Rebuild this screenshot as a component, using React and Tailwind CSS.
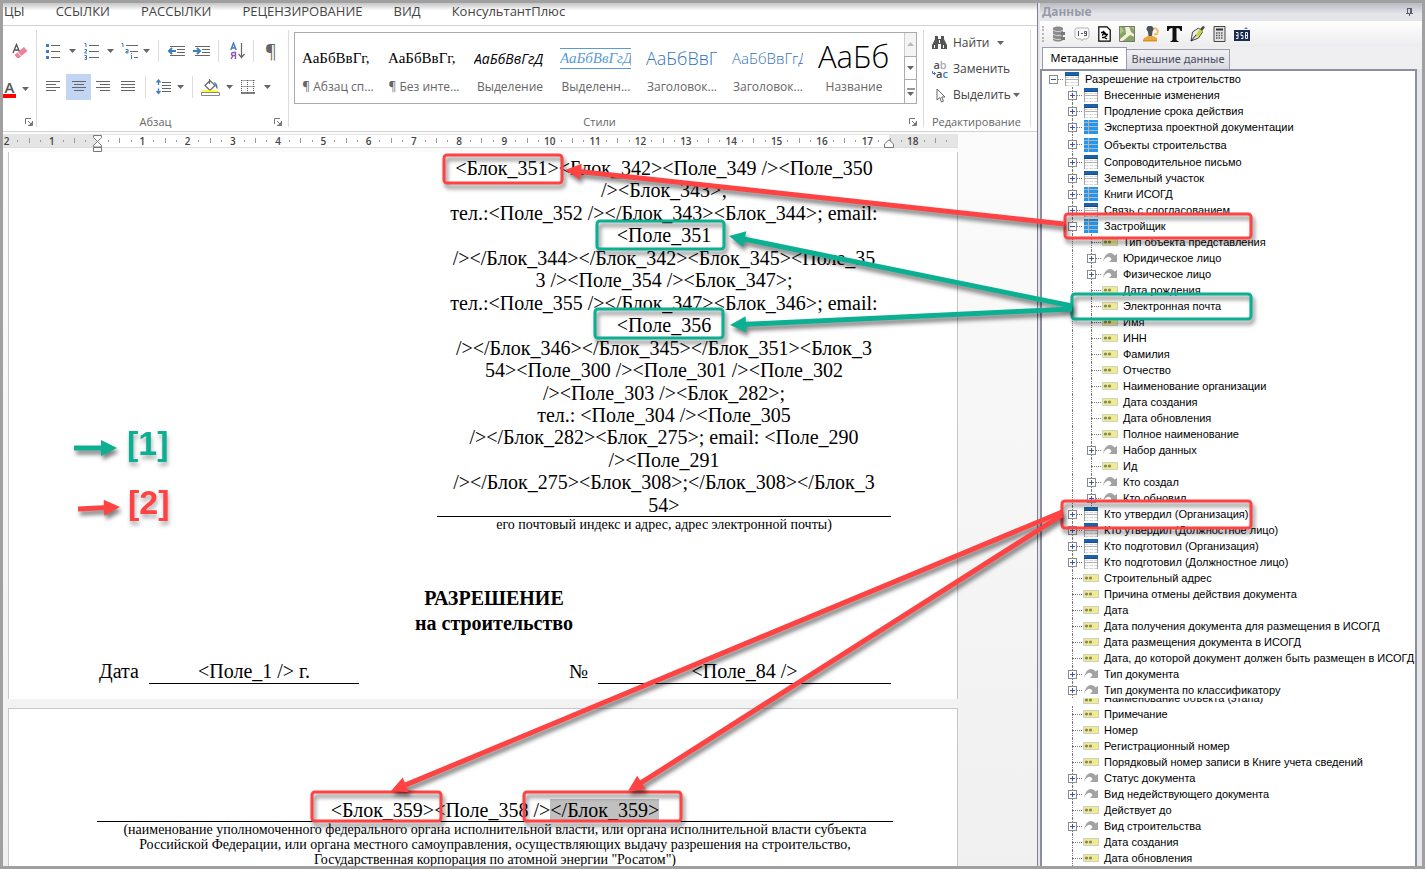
import React from "react";
import clsx from "clsx";

const RIBBON_TABS = ["ЦЫ", "ССЫЛКИ", "РАССЫЛКИ", "РЕЦЕНЗИРОВАНИЕ", "ВИД", "КонсультантПлюс"];

const STYLES = [
  { sample: "АаБбВвГг,", name: "¶ Абзац сп...", className: "font-['Liberation_Serif',serif] text-[15px] text-black" },
  { sample: "АаБбВвГг,", name: "¶ Без инте...", className: "font-['Liberation_Serif',serif] text-[15px] text-black" },
  { sample: "АаБбВвГгД", name: "Выделение", className: "text-[14px] italic text-black" },
  {
    sample: "АаБбВвГгД",
    name: "Выделенн...",
    className: "border-y border-[#5b9bd5] font-['Liberation_Serif',serif] text-[15px] italic text-[#5b9bd5]",
  },
  { sample: "АаБбВвГ", name: "Заголовок...", className: "text-[18px] font-light text-[#2e74b5]" },
  { sample: "АаБбВвГгД", name: "Заголовок...", className: "text-[15px] font-light text-[#2e74b5]" },
  { sample: "АаБб", name: "Название", className: "text-[31px] font-light text-black" },
];

const ADDRESS_LINES = [
  "<Блок_351><Блок_342><Поле_349 /><Поле_350",
  "/><Блок_343>;",
  "тел.:<Поле_352 /></Блок_343><Блок_344>; email:",
  "<Поле_351",
  "/></Блок_344></Блок_342><Блок_345><Поле_35",
  "3 /><Поле_354 /><Блок_347>;",
  "тел.:<Поле_355 /></Блок_347><Блок_346>; email:",
  "<Поле_356",
  "/></Блок_346></Блок_345></Блок_351><Блок_3",
  "54><Поле_300 /><Поле_301 /><Поле_302",
  "/><Поле_303 /><Блок_282>;",
  "тел.: <Поле_304 /><Поле_305",
  "/></Блок_282><Блок_275>; email: <Поле_290",
  "/><Поле_291",
  "/></Блок_275><Блок_308>;</Блок_308></Блок_3",
  "54>",
];

// icon: table | grid | ref | field
const TREE = [
  { level: 0, icon: "table", label: "Разрешение на строительство", open: true },
  { level: 1, icon: "table", label: "Внесенные изменения", open: false },
  { level: 1, icon: "table", label: "Продление срока действия", open: false },
  { level: 1, icon: "grid", label: "Экспертиза проектной документации", open: false },
  { level: 1, icon: "grid", label: "Объекты строительства", open: false, tall: true },
  { level: 1, icon: "table", label: "Сопроводительное письмо", open: false },
  { level: 1, icon: "table", label: "Земельный участок", open: false },
  { level: 1, icon: "grid", label: "Книги ИСОГД", open: false },
  { level: 1, icon: "table", label: "Связь с слогласованием", open: false },
  { level: 1, icon: "grid", label: "Застройщик", open: true },
  { level: 2, icon: "field", label: "Тип объекта представления" },
  { level: 2, icon: "ref", label: "Юридическое лицо", open: false },
  { level: 2, icon: "ref", label: "Физическое лицо", open: false },
  { level: 2, icon: "field", label: "Дата рождения" },
  { level: 2, icon: "field", label: "Электронная почта" },
  { level: 2, icon: "field", label: "Имя" },
  { level: 2, icon: "field", label: "ИНН" },
  { level: 2, icon: "field", label: "Фамилия" },
  { level: 2, icon: "field", label: "Отчество" },
  { level: 2, icon: "field", label: "Наименование организации" },
  { level: 2, icon: "field", label: "Дата создания" },
  { level: 2, icon: "field", label: "Дата обновления" },
  { level: 2, icon: "field", label: "Полное наименование" },
  { level: 2, icon: "ref", label: "Набор данных", open: false },
  { level: 2, icon: "field", label: "Ид" },
  { level: 2, icon: "ref", label: "Кто создал", open: false },
  { level: 2, icon: "ref", label: "Кто обновил", open: false },
  { level: 1, icon: "table", label: "Кто утвердил (Организация)", open: false },
  { level: 1, icon: "table", label: "Кто утвердил (Должностное лицо)", open: false },
  { level: 1, icon: "table", label: "Кто подготовил (Организация)", open: false },
  { level: 1, icon: "table", label: "Кто подготовил (Должностное лицо)", open: false },
  { level: 1, icon: "field", label: "Строительный адрес" },
  { level: 1, icon: "field", label: "Причина отмены действия документа" },
  { level: 1, icon: "field", label: "Дата" },
  { level: 1, icon: "field", label: "Дата получения документа для размещения в ИСОГД" },
  { level: 1, icon: "field", label: "Дата размещения документа в ИСОГД" },
  { level: 1, icon: "field", label: "Дата, до которой документ должен быть размещен в ИСОГД" },
  { level: 1, icon: "ref", label: "Тип документа", open: false },
  { level: 1, icon: "ref", label: "Тип документа по классификатору", open: false },
  { level: 1, icon: "field", label: "Наименование объекта (этапа)", cut: true },
  { level: 1, icon: "field", label: "Примечание" },
  { level: 1, icon: "field", label: "Номер" },
  { level: 1, icon: "field", label: "Регистрационный номер" },
  { level: 1, icon: "field", label: "Порядковый номер записи в Книге учета сведений" },
  { level: 1, icon: "ref", label: "Статус документа", open: false },
  { level: 1, icon: "ref", label: "Вид недействующего документа", open: false },
  { level: 1, icon: "field", label: "Действует до" },
  { level: 1, icon: "ref", label: "Вид строительства", open: false },
  { level: 1, icon: "field", label: "Дата создания" },
  { level: 1, icon: "field", label: "Дата обновления" },
];

/* ---------- ribbon icons ---------- */

const Caret = ({ className }) => (
  <svg width="7" height="4" viewBox="0 0 7 4" className={clsx("shrink-0", className)} fill="#666">
    <path d="M0 0h7L3.5 4z" />
  </svg>
);

const Launcher = () => (
  <svg width="8" height="8" viewBox="0 0 8 8" fill="none" stroke="#777">
    <path d="M.5 6V.5H6M3 3l3 3M7.5 3v4.5H3" />
    <path d="M7 4v3H4z" fill="#777" stroke="none" />
  </svg>
);

const Lines = ({ rows, width = 14 }) => (
  <svg width={width} height="12" viewBox={`0 0 ${width} 12`} stroke="#666">
    {rows.map(([from, to], i) => (
      <path key={i} d={`M${from} ${i * 3 + 0.5}H${to}`} />
    ))}
  </svg>
);

const EraserIcon = () => (
  <svg width="16" height="18" viewBox="0 0 16 18">
    <path d="M1 11L4.500 2.500L8 11M2.300 8H6.800" fill="none" stroke="#555" strokeWidth="1.4" />
    <path d="M6 10l6-5 3.500 4-6 5z" fill="#e8849a" />
    <path d="M2.500 13l3-2.500 3.500 4-2 1.500H5z" fill="#e8849a" />
  </svg>
);

const BulletsIcon = () => (
  <svg width="14" height="17" viewBox="0 0 14 17">
    <path d="M5 2.500h9M5 8.500h9M5 14.500h9" stroke="#666" />
    <path d="M0 1h3v3H0zM0 7h3v3H0zM0 13h3v3H0z" fill="#3f7dbd" />
  </svg>
);

const NumbersIcon = () => (
  <svg width="15" height="17" viewBox="0 0 15 17" fill="none">
    <path d="M5 2.500h10M5 8.500h10M5 14.500h10" stroke="#666" />
    <path d="M.5 .5H2V4M.5 6.500h2v1.500L.5 10h2.500M.5 12.500h2v4h-2M1 14.500h1.500" stroke="#3f7dbd" />
  </svg>
);

const MultilevelIcon = () => (
  <svg width="17" height="17" viewBox="0 0 17 17" fill="none">
    <path d="M5 2.500h12M9 8.500h8M13 14.500h4" stroke="#666" />
    <path d="M.5 .5H2V4M4.500 6.500H7V10H5V8.500h2M10.500 10v1M10.500 12v4" stroke="#3f7dbd" />
  </svg>
);

const IndentIcon = ({ out }) => (
  <svg width="17" height="13" viewBox="0 0 17 13" fill="none">
    <path d="M2 1.500h15M9 4.500h8M9 7.500h8M2 10.500h15" stroke="#666" />
    <path d="M0 3h8v6H0z" fill="#fff" />
    <path d={out ? "M8 6H1.500M4 3L1 6l3 3" : "M0 6h6.500M4 3l3 3-3 3"} stroke="#3f7dbd" strokeWidth="2" />
  </svg>
);

const SortIcon = () => (
  <svg width="15" height="18" viewBox="0 0 15 18" fill="none">
    <path d="M.8 8L3.500 1L6.200 8M1.800 6h3.500" stroke="#3f7dbd" strokeWidth="1.400" />
    <path d="M5.500 17v-6.500H3a1.500 1.500 0 0 0 0 3h2.500M3 13.500L1 17" stroke="#8b55b5" strokeWidth="1.400" />
    <path d="M11.500 1v14M8.500 12l3 3.500 3-3.500" stroke="#666" strokeWidth="1.200" />
  </svg>
);

const SpacingIcon = () => (
  <svg width="15" height="16" viewBox="0 0 15 16" fill="none">
    <path d="M6 3.500h9M6 6.500h9M6 9.500h9M6 12.500h9" stroke="#666" />
    <path d="M2.500 1v5M.5 3.500L2.500 1l2 2.500M2.500 9.500v5M.5 12l2 2.500 2-2.500" stroke="#3f7dbd" strokeWidth="1.300" />
  </svg>
);

const BucketIcon = () => (
  <svg width="19" height="19" viewBox="0 0 19 19" fill="none">
    <path d="M4 7.500L9 2.500l5 5-5 5zM8.500 6V1" stroke="#666" strokeWidth="1.200" />
    <path d="M12.500 4c3 .5 4.500 3 4 7-1.200-.5-2-2-2-4z" fill="#3f7dbd" />
    <path d="M1 12.500h16v2H1z" fill="#ff0" />
    <path d="M.5 14.500h18v3H.5z" fill="#fff" stroke="#888" />
  </svg>
);

const BordersIcon = () => (
  <svg width="14" height="14" viewBox="0 0 14 14" fill="none" stroke="#555">
    <path d="M.5 .5h13M.5 6.500h13M.5 0v13M6.500 0v13M12.500 0v13" strokeDasharray="1 1" />
    <path d="M0 13h14" strokeWidth="1.500" />
  </svg>
);

const BinocularsIcon = () => (
  <svg width="15" height="14" viewBox="0 0 15 14" fill="#555">
    <path d="M3 0h3v3h3V0h3v3l3 6v4H9V8H6v5H0V9l3-6z" />
    <path d="M2 9h1v3H2zM11 9h1v3h-1zM7 4h1v3H7z" fill="#fff" />
  </svg>
);

const ReplaceIcon = () => (
  <span className="flex w-4 flex-col text-[11px] leading-[7px] font-semibold">
    <span className="text-[#555]">
      a<span className="text-[#aaa]">b</span>
    </span>
    <span className="flex items-center pt-0.5 text-[#444]">
      <svg width="4" height="5" viewBox="0 0 4 5" fill="none" stroke="#3f7dbd">
        <path d="M.5 0v2.500h3M2 1l1.500 1.500L2 4" />
      </svg>
      a<span className="text-[#3f7dbd]">c</span>
    </span>
  </span>
);

const CursorIcon = () => (
  <svg width="10" height="15" viewBox="0 0 10 15" fill="#fff" stroke="#666">
    <path d="M1 1v11l2.800-2.500L5.500 14l2-.8-1.800-4.200H9z" />
  </svg>
);

const Divider = ({ className }) => <span className={clsx("w-px self-stretch bg-[#dcdcdc]", className)} />;

const ToolButton = ({ label, className, children }) => (
  <button type="button" aria-label={label} className={clsx("flex items-center", className)}>
    {children}
  </button>
);

/* ---------- tree icons ---------- */

const TableIcon = () => (
  <svg width="14" height="14" viewBox="0 0 14 14">
    <path d="M0 4h14v10H0z" fill="#fff" />
    <path d="M1 5.500h12M1 10.500h12M1 13.500h12" stroke="#d6d6d6" strokeDasharray="3.500 1" />
    <path d="M0 7.500h14" stroke="#b0b0b0" />
    <path d="M.5 3v11M13.500 3v11" stroke="#a5a5a5" />
    <path d="M0 0h14v3H0z" fill="#1c62a8" />
    <path d="M0 3h14v1H0z" fill="#154c85" />
  </svg>
);

const GridIcon = () => (
  <svg width="14" height="14" viewBox="0 0 14 14">
    <path d="M0 0h14v14H0z" fill="#b9b4ae" />
    <path d="M0 0h4v2H0zM5 0h9v2H5zM0 3h4v3H0zM5 3h9v3H5zM0 7h4v3H0zM5 7h9v3H5zM0 11h4v3H0zM5 11h9v3H5z" fill="#2196f3" />
  </svg>
);

const RefIcon = () => (
  <svg width="15" height="11" viewBox="0 0 15 11" fill="#a3a3a3">
    <path d="M0 9C1 3 4 0 7 0c2 0 3.500 1 4.500 2.500L14 1v8H6l2.500-2.500C7.500 4 6 3.500 4.500 4 2.500 4.700 1 6.500 0 9z" />
  </svg>
);

const FieldIcon = () => (
  <svg width="16" height="8" viewBox="0 0 16 8">
    <path d="M0 0h16v8H0z" fill="#cfcfc6" />
    <path d="M1 1h14v6H1z" fill="#eeec8e" />
    <circle cx="3.500" cy="4" r="1.600" fill="#85855f" />
    <circle cx="7.500" cy="4" r="1.600" fill="#85855f" />
  </svg>
);

const TREE_ICONS = { table: TableIcon, grid: GridIcon, ref: RefIcon, field: FieldIcon };

const TreeRow = ({ node }) => {
  const Icon = TREE_ICONS[node.icon];
  const expandable = node.open !== undefined;
  return (
    <li
      className={clsx(
        "flex shrink-0 overflow-hidden whitespace-nowrap",
        node.cut ? "h-2 items-end pb-0.5" : "items-center",
        node.tall && "h-[19px]",
        !node.cut && !node.tall && "h-4"
      )}
    >
      {node.level > 0 && <span className="w-[19px]" />}
      {node.level > 1 && (
        <span className="flex w-[19px] self-stretch pl-[9px]">
          <span className="border-l border-dotted border-[#777]" />
        </span>
      )}
      <span className="relative flex w-[19px] shrink-0 items-center self-stretch">
        {node.level > 0 && !node.cut && (
          <span className="absolute inset-y-0 left-[9px] border-l border-dotted border-[#777]" />
        )}
        {!node.cut && <span className="ml-[9px] w-[11px] border-t border-dotted border-[#777]" />}
        {expandable && (
          <button
            type="button"
            aria-label={node.label}
            aria-expanded={node.open}
            className="absolute left-[5px] flex size-[9px] items-center justify-center border border-[#8c8c8c] bg-white"
          >
            <svg width="5" height="5" viewBox="0 0 5 5" stroke="#3a55a4">
              <path d={node.open ? "M0 2.500h5" : "M0 2.500h5M2.500 0v5"} />
            </svg>
          </button>
        )}
      </span>
      <span className={clsx("flex w-[22px] shrink-0", node.icon === "field" ? "pl-px" : "pl-0.5")}>
        <Icon />
      </span>
      <span className={clsx(node.cut ? "leading-3" : "leading-4")}>{node.label}</span>
    </li>
  );
};

/* ---------- data panel ---------- */

const PanelToolbar = () => (
  <div className="flex h-[26px] shrink-0 items-center gap-2 bg-gradient-to-b from-white to-[#ececee] pl-0.5">
    <span className="h-4 border-l-2 border-dotted border-[#b5b5b5]" />
    <ToolButton label="База данных">
      <svg width="14" height="16" viewBox="0 0 14 16">
        <path d="M1 2c2-2 8-2 10 0v12c-2 2-8 2-10 0z" fill="#8b8b8b" />
        <path d="M1 4c2 2 8 2 10 0M1 8c2 2 8 2 10 0M1 12c2 2 8 2 10 0" stroke="#d8d8d8" fill="none" />
        <path d="M9 6h4v3H9zM9 11h4v3H9z" fill="#777" />
      </svg>
    </ToolButton>
    <ToolButton label="Диапазон">
      <svg width="16" height="15" viewBox="0 0 16 15">
        <path d="M2 1h12l1 2v7l-2 2h-4l-1 2-1-2H3l-2-2V3z" fill="#fafafa" stroke="#b5b5b5" />
        <path d="M4.500 4v5M7 6.500h2M10 8.500h2.500V4.500H10.500v2h2" stroke="#555" fill="none" />
      </svg>
    </ToolButton>
    <ToolButton label="Документ">
      <svg width="13" height="16" viewBox="0 0 13 16" fill="none" stroke="#000">
        <path d="M.8 .8H9l3.200 3.200v11.200H.8z" fill="#fff" strokeWidth="1.200" />
        <path d="M3 6.500h3l1 2h3M4 9.500l2-2M5 5l3 3M4 11.500h2l3-2M7 12l2 1" strokeWidth="1.300" />
      </svg>
    </ToolButton>
    <ToolButton label="Карта">
      <svg width="16" height="16" viewBox="0 0 16 16">
        <path d="M0 0h16v16H0z" fill="#84a565" />
        <path d="M6 0h4l2 6 4 3v2l-5-2-6 5-3 2H0v-2l7-6z" fill="#f4f0d8" />
        <path d="M11 0l5 5V0zM0 9l5-4-3-5H0z" fill="#a9c97f" />
        <path d="M.5 .5h15v15H.5z" fill="none" stroke="#777" />
      </svg>
    </ToolButton>
    <ToolButton label="Пользователь">
      <svg width="16" height="16" viewBox="0 0 16 16">
        <path d="M10 2.500h3l2 2.500-1 3-3 .5" fill="none" stroke="#f0b95c" strokeWidth="1.800" />
        <path d="M3.500 3.500a3.500 3.500 0 1 1 6 2L9 10H5.500L5 6z" fill="#4c5359" />
        <path d="M1 12l4-2h5l4 2v2H0z" fill="#e9a63c" />
        <path d="M0 14h14v1.500H0z" fill="#d8902a" />
      </svg>
    </ToolButton>
    <ToolButton label="Текст">
      <svg width="15" height="16" viewBox="0 0 15 16">
        <path d="M0 0h15v5h-1.500c-.5-2-1.500-3-4-3v11c0 1.500.5 2 2 2v1H3.500v-1c1.500 0 2-.5 2-2V2c-2.500 0-3.500 1-4 3H0z" fill="#111" />
      </svg>
    </ToolButton>
    <ToolButton label="Подпись">
      <svg width="15" height="16" viewBox="0 0 15 16">
        <path d="M1 15L2.500 6l6-4 4 4-4 6z" fill="#e9e9e9" stroke="#444" />
        <path d="M5 10l5-7 3-1-1 4-4 5z" fill="#c9d42a" />
        <path d="M10 3l3-3 2 1-3 4z" fill="#444" />
        <path d="M1 15l5-6" stroke="#222" />
      </svg>
    </ToolButton>
    <ToolButton label="Калькулятор">
      <svg width="13" height="16" viewBox="0 0 13 16">
        <path d="M1 .5h11v15H1z" fill="#e4e4e4" stroke="#444" />
        <path d="M3 2.500h7v2H3z" fill="#333" />
        <path d="M3 7h7M3 9.500h7M3 12h7" stroke="#555" strokeWidth="1.500" strokeDasharray="1.500 1" />
      </svg>
    </ToolButton>
    <ToolButton label="Счетчик">
      <svg width="16" height="16" viewBox="0 0 16 16">
        <path d="M0 4h16v11H0z" fill="#1b2c4f" />
        <path d="M2 6.500h2v6H2M2 9.500h2M9 6.500H7v3h2v3H7M11.500 6.500h2v6h-2zM11.500 9.500h2" stroke="#e8eef8" fill="none" />
        <path d="M10 3l2-2 2 2z" fill="#5d7cc0" />
      </svg>
    </ToolButton>
  </div>
);

const DataPanel = () => (
  <aside className="flex w-[385px] shrink-0 flex-col border-l border-[#7d7f92] bg-[#e6e6ea] pl-0.5 font-['Liberation_Sans',Arial,sans-serif] text-[11px] text-black">
    <header className="flex h-[18px] shrink-0 items-center justify-between bg-gradient-to-b from-[#b9bac0] to-[#e4e5ea] to-60% pl-0.5 pr-[9px]">
      <h2 className="font-['Noto_Sans',sans-serif] text-[12px] leading-4 font-bold text-[#9699a8]">Данные</h2>
      <button type="button" aria-label="Закрепить">
        <svg width="7" height="8" viewBox="0 0 7 8" fill="none" stroke="#5a5c70">
          <path d="M1.500 0v5M2 .5h3M4.500 0v5M5.500 0v5M0 5.500h7M3.500 5v3" />
        </svg>
      </button>
    </header>
    <PanelToolbar />
    <div role="tablist" className="flex h-[22px] shrink-0 items-end bg-[#efeff1] pl-0.5 font-['Noto_Sans',sans-serif]">
      <button
        type="button"
        role="tab"
        aria-selected="true"
        className="h-[22px] w-[85px] border border-b-0 border-[#9a9cac] bg-white text-center"
      >
        Метаданные
      </button>
      <button
        type="button"
        role="tab"
        aria-selected="false"
        className="h-[20px] w-[103px] border border-b-0 border-l-0 border-[#9a9cac] bg-gradient-to-b from-[#f1f1f4] to-[#d9dae0] text-center text-[#4a4c60]"
      >
        Внешние данные
      </button>
    </div>
    <div className="mr-[5px] flex min-h-0 flex-1 flex-col overflow-hidden border-x-2 border-t-2 border-[#8b8da0] bg-white pl-0.5">
      <ul className="flex flex-col">
        {TREE.map((node, i) => (
          <TreeRow key={i} node={node} />
        ))}
      </ul>
    </div>
  </aside>
);

/* ---------- ribbon ---------- */

const FontGroup = () => (
  <div className="flex w-8 flex-col pb-px">
    <div className="flex h-[38px] items-center pl-[9px] pt-1">
      <ToolButton label="Очистить формат">
        <EraserIcon />
      </ToolButton>
    </div>
    <div className="mt-3 flex items-center gap-1.5">
      <button type="button" className="w-[13px] border-b-4 border-[#f00] text-[15px] leading-[14px] font-semibold text-[#555]">
        А
      </button>
      <Caret />
    </div>
    <div className="mt-auto flex h-4 items-center justify-end pr-0.5">
      <button type="button" aria-label="Шрифт">
        <Launcher />
      </button>
    </div>
  </div>
);

const ParagraphGroup = () => (
  <div className="flex w-[251px] flex-col pb-px">
    <div className="mt-2.5 flex h-[22px] items-center pl-[9px]">
      <ToolButton label="Маркеры" className="gap-[9px]">
        <BulletsIcon />
        <Caret />
      </ToolButton>
      <ToolButton label="Нумерация" className="ml-2 gap-2">
        <NumbersIcon />
        <Caret />
      </ToolButton>
      <ToolButton label="Многоуровневый список" className="ml-[7px] gap-[5px]">
        <MultilevelIcon />
        <Caret />
      </ToolButton>
      <Divider className="ml-2" />
      <ToolButton label="Уменьшить отступ" className="ml-[9px]">
        <IndentIcon out />
      </ToolButton>
      <ToolButton label="Увеличить отступ" className="ml-2">
        <IndentIcon />
      </ToolButton>
      <Divider className="ml-2" />
      <ToolButton label="Сортировка" className="ml-[11px]">
        <SortIcon />
      </ToolButton>
      <Divider className="ml-2" />
      <ToolButton label="Все знаки" className="ml-[11px] text-[18px] leading-[22px] text-[#666]">
        ¶
      </ToolButton>
    </div>
    <div className="mt-3 flex h-[26px] items-center pl-[9px]">
      <ToolButton label="По левому краю">
        <Lines rows={[[0, 14], [0, 10], [0, 14], [0, 10]]} />
      </ToolButton>
      <ToolButton label="По центру" className="ml-1.5 h-[26px] w-[25px] justify-center bg-[#c2d5f2]">
        <Lines rows={[[0, 14], [2, 12], [0, 14], [2, 12]]} />
      </ToolButton>
      <ToolButton label="По правому краю" className="ml-[5px]">
        <Lines rows={[[0, 14], [4, 14], [0, 14], [4, 14]]} />
      </ToolButton>
      <ToolButton label="По ширине" className="ml-[11px]">
        <Lines rows={[[0, 14], [0, 14], [0, 14], [0, 14]]} />
      </ToolButton>
      <Divider className="my-0.5 ml-[10px]" />
      <ToolButton label="Интервал" className="ml-[10px] gap-1.5">
        <SpacingIcon />
        <Caret />
      </ToolButton>
      <Divider className="my-0.5 ml-2" />
      <ToolButton label="Заливка" className="ml-2 gap-1.5">
        <BucketIcon />
        <Caret />
      </ToolButton>
      <ToolButton label="Границы" className="ml-2 gap-[9px]">
        <BordersIcon />
        <Caret />
      </ToolButton>
    </div>
    <div className="mt-auto flex h-4 items-center pr-1.5">
      <span className="flex-1 text-center text-[11px]">Абзац</span>
      <button type="button" aria-label="Параметры абзаца">
        <Launcher />
      </button>
    </div>
  </div>
);

const StylesGroup = () => (
  <div className="flex w-[634px] flex-col pb-px pl-[5px] pr-1.5 pt-0.5">
    <div className="flex h-[72px] border border-[#ababab]">
      <div className="flex flex-1 pl-[7px]">
        {STYLES.map((style, i) => (
          <button key={i} type="button" className="flex w-[86px] flex-col text-left">
            <span className={clsx("flex h-[46px] w-[71px]", i === 6 ? "items-center" : "items-center pt-1")}>
              <span className={clsx("w-[71px] overflow-hidden whitespace-nowrap", i === 6 ? "leading-[40px]" : "leading-[19px]", style.className)}>
                {style.sample}
              </span>
            </span>
            <span className="-ml-0.5 w-[76px] text-center leading-4 whitespace-nowrap">{style.name}</span>
          </button>
        ))}
      </div>
      <div className="-mr-px flex w-[18px] flex-col border-r border-[#ababab]">
        <button type="button" aria-label="Вверх" className="flex flex-1 items-center justify-center border-l border-[#ccc] bg-[#f4f4f4]">
          <Caret className="rotate-180 opacity-40" />
        </button>
        <button type="button" aria-label="Вниз" className="flex flex-1 items-center justify-center border border-r-0 border-[#ababab]">
          <Caret />
        </button>
        <button type="button" aria-label="Все стили" className="flex flex-1 flex-col items-center justify-center gap-0.5 border-l border-[#ababab]">
          <span className="h-0.5 w-2 bg-[#999]" />
          <Caret />
        </button>
      </div>
    </div>
    <div className="mt-auto flex h-4 items-center">
      <span className="flex-1 pr-1 text-center text-[11px]">Стили</span>
      <button type="button" aria-label="Параметры стилей">
        <Launcher />
      </button>
    </div>
  </div>
);

const EditingGroup = () => (
  <div className="flex w-[106px] flex-col pb-px pl-2 text-[#444]">
    <button type="button" className="flex h-[26px] items-center">
      <span className="flex w-[21px]">
        <BinocularsIcon />
      </span>
      Найти
      <Caret className="ml-2" />
    </button>
    <button type="button" className="flex h-[26px] items-center">
      <span className="flex w-[21px]">
        <ReplaceIcon />
      </span>
      Заменить
    </button>
    <button type="button" className="flex h-[26px] items-center">
      <span className="flex w-[21px] pl-1">
        <CursorIcon />
      </span>
      Выделить
      <Caret className="ml-0.5" />
    </button>
    <div className="mt-auto h-4 text-[11px] leading-4 text-[#666]">Редактирование</div>
  </div>
);

const Ribbon = () => (
  <div className="flex h-[106px] shrink-0 border-b border-[#d2d2d2] bg-white text-[12px] text-[#666]">
    <div className="flex pt-1">
      <FontGroup />
      <Divider className="mb-1 ml-px" />
      <ParagraphGroup />
      <Divider className="mb-1" />
      <StylesGroup />
      <Divider className="mb-1" />
      <EditingGroup />
      <Divider className="mb-1" />
    </div>
  </div>
);

/* ---------- ruler: four marks per centimetre ---------- */

const RULER_MARKS = Array.from({ length: 84 }, (_, i) => i - 8);

const RulerMark = ({ index }) => {
  if (index === 0) return <span className="flex-1" />;
  if (index % 4 === 0) {
    return <span className="flex flex-1 justify-center text-[10px] leading-3 font-semibold">{Math.abs(index / 4)}</span>;
  }
  return (
    <span className="flex flex-1 items-center justify-center">
      <span className={clsx("w-px bg-[#999]", index % 2 === 0 ? "h-[5px]" : "h-0.5")} />
    </span>
  );
};

const Ruler = () => (
  <div className="relative flex h-[17px] shrink-0 items-center">
    <div className="-ml-0.5 flex h-3 w-[957px] bg-[linear-gradient(90deg,#e5e5e5_96px,#fff_96px,#fff_888px,#e5e5e5_888px)] pr-[6px] text-[#444] shadow-[0_1px_0_#dcdcdc,0_-1px_0_#e4e4e4]">
      {RULER_MARKS.map((index) => (
        <RulerMark key={index} index={index} />
      ))}
    </div>
    <svg width="11" height="18" viewBox="0 0 11 18" className="absolute left-[89px] top-[3px]" fill="#fff" stroke="#777">
      <path d="M1.500 .5h8v2L5.500 6.500l-4-4z" />
      <path d="M5.500 6.500l4 4v1.500h-8v-1.500zM1.500 12.500h8v4h-8z" />
    </svg>
    <svg width="10" height="9" viewBox="0 0 10 9" className="absolute left-[881px] top-[7px]" fill="#fff" stroke="#777">
      <path d="M.5 8.500V5L5 .8 9.500 5v3.500z" />
    </svg>
  </div>
);

/* ---------- document ---------- */

const Document = () => (
  <div className="flex min-h-0 flex-1 flex-col overflow-hidden bg-gradient-to-b from-[#fbfbfb] to-[#f0f0f0] pl-[5px] pt-[3px] font-['Liberation_Serif','Times_New_Roman',serif] text-[20px] text-black">
    <section className="w-[950px] shrink-0 border-x border-[#c6c6c6] bg-white pt-[5px] pr-[66px] pb-[15px] pl-[88px]">
      <div className="ml-[340px] flex h-[360px] flex-col justify-between border-b border-black text-center leading-[22px] whitespace-nowrap">
        {ADDRESS_LINES.map((line, i) => (
          <div key={i}>{line}</div>
        ))}
      </div>
      <p className="ml-[340px] text-center text-[14px] leading-[15px]">
        его почтовый индекс и адрес, адрес электронной почты)
      </p>
      <h1 className="mt-[54px] text-center text-[20px] leading-[25px] font-bold">
        РАЗРЕШЕНИЕ
        <br />
        на строительство
      </h1>
      <div className="mt-[24px] flex text-center leading-[23px]">
        <span className="w-[52px] pl-0.5 text-left">Дата</span>
        <span className="w-[210px] border-b border-black">&lt;Поле_1 /&gt; г.</span>
        <span className="flex-1 pr-2.5 text-right">№</span>
        <span className="w-[293px] border-b border-black">&lt;Поле_84 /&gt;</span>
      </div>
    </section>
    <section className="mt-[9px] w-[950px] flex-1 border border-b-0 border-[#c6c6c6] bg-white pt-[90px] pr-[64px] pl-[88px] text-center">
      <p className="border-b border-black leading-[22px]">
        &lt;Блок_359&gt;&lt;Поле_358 /&gt;<span className="bg-[#c0c0c0]">&lt;/Блок_359&gt;</span>
      </p>
      <p className="text-[14px] leading-[15px]">
        (наименование уполномоченного федерального органа исполнительной власти, или органа исполнительной власти субъекта
        <br />
        Российской Федерации, или органа местного самоуправления, осуществляющих выдачу разрешения на строительство,
        <br />
        Государственная корпорация по атомной энергии "Росатом")
      </p>
    </section>
  </div>
);

/* ---------- callouts drawn over the window ---------- */

const RED = "#ff4343";
const GREEN = "#0bb092";

const BOXES = [
  { color: RED, x: 444, y: 155, w: 118, h: 28 },
  { color: RED, x: 1065, y: 214, w: 186, h: 24 },
  { color: RED, x: 1062, y: 501, w: 189, h: 27 },
  { color: RED, x: 312, y: 792, w: 129, h: 29 },
  { color: RED, x: 524, y: 792, w: 157, h: 29 },
  { color: GREEN, x: 597, y: 221, w: 127, h: 28 },
  { color: GREEN, x: 595, y: 309, w: 128, h: 29 },
  { color: GREEN, x: 1072, y: 294, w: 179, h: 25 },
];

const ARROWS = [
  { color: RED, from: [1064, 224], to: [565, 170] },
  { color: GREEN, from: [1072, 306], to: [729, 236] },
  { color: GREEN, from: [1072, 309], to: [730, 325] },
  { color: RED, from: [1062, 512], to: [391, 791] },
  { color: RED, from: [1062, 515], to: [628, 791] },
  { color: GREEN, from: [74, 448], to: [117, 448] },
  { color: RED, from: [78, 509], to: [120, 507] },
];

const Arrow = ({ color, from, to }) => {
  const angle = Math.atan2(to[1] - from[1], to[0] - from[0]);
  const at = (back, side) =>
    `${to[0] - Math.cos(angle) * back - Math.sin(angle) * side},${to[1] - Math.sin(angle) * back + Math.cos(angle) * side}`;
  const [endX, endY] = at(12, 0).split(",");
  return (
    <g>
      <line x1={from[0]} y1={from[1]} x2={endX} y2={endY} stroke={color} strokeWidth="5" />
      <polygon points={`${at(0, 0)} ${at(16, 8)} ${at(16, -8)}`} fill={color} />
    </g>
  );
};

const Callouts = () => (
  <svg
    width="1425"
    height="869"
    viewBox="0 0 1425 869"
    className="pointer-events-none absolute left-0 top-0"
  >
    <g className="drop-shadow-[2px_4px_2px_rgba(0,0,0,0.5)]">
      {BOXES.map((box, i) => (
        <rect key={i} x={box.x} y={box.y} width={box.w} height={box.h} rx="3" fill="none" stroke={box.color} strokeWidth="3" />
      ))}
    </g>
    <g className="drop-shadow-[2px_4px_2px_rgba(0,0,0,0.5)]">
      {ARROWS.map((arrow, i) => (
        <Arrow key={i} {...arrow} />
      ))}
    </g>
    <g className="font-['Liberation_Sans',Arial,sans-serif] text-[34px] font-bold drop-shadow-[1px_4px_2px_rgba(0,0,0,0.3)]">
      <text x="127" y="455" fill={GREEN}>[1]</text>
      <text x="128" y="514" fill={RED}>[2]</text>
    </g>
  </svg>
);

export default function App() {
  return (
    <div className="relative flex h-screen overflow-hidden border-[3px] border-[#a0a0a0] bg-white">
      <main className="flex min-w-0 flex-1 flex-col overflow-hidden bg-[#fbfbfb] font-['Open_Sans','Noto_Sans',sans-serif]">
        <nav className="flex h-[23px] shrink-0 gap-[31px] border-b border-[#d2d2d2] bg-white bg-gradient-to-b from-[#c4c4c4] to-white to-35% pl-px text-[13px] leading-[17px] text-[#444]">
          {RIBBON_TABS.map((tab) => (
            <button key={tab} type="button" className="h-[17px]">
              {tab}
            </button>
          ))}
        </nav>
        <Ribbon />
        <Ruler />
        <Document />
      </main>
      <DataPanel />
      <div className="pointer-events-none absolute -left-[3px] -top-[3px]">
        <Callouts />
      </div>
    </div>
  );
}
